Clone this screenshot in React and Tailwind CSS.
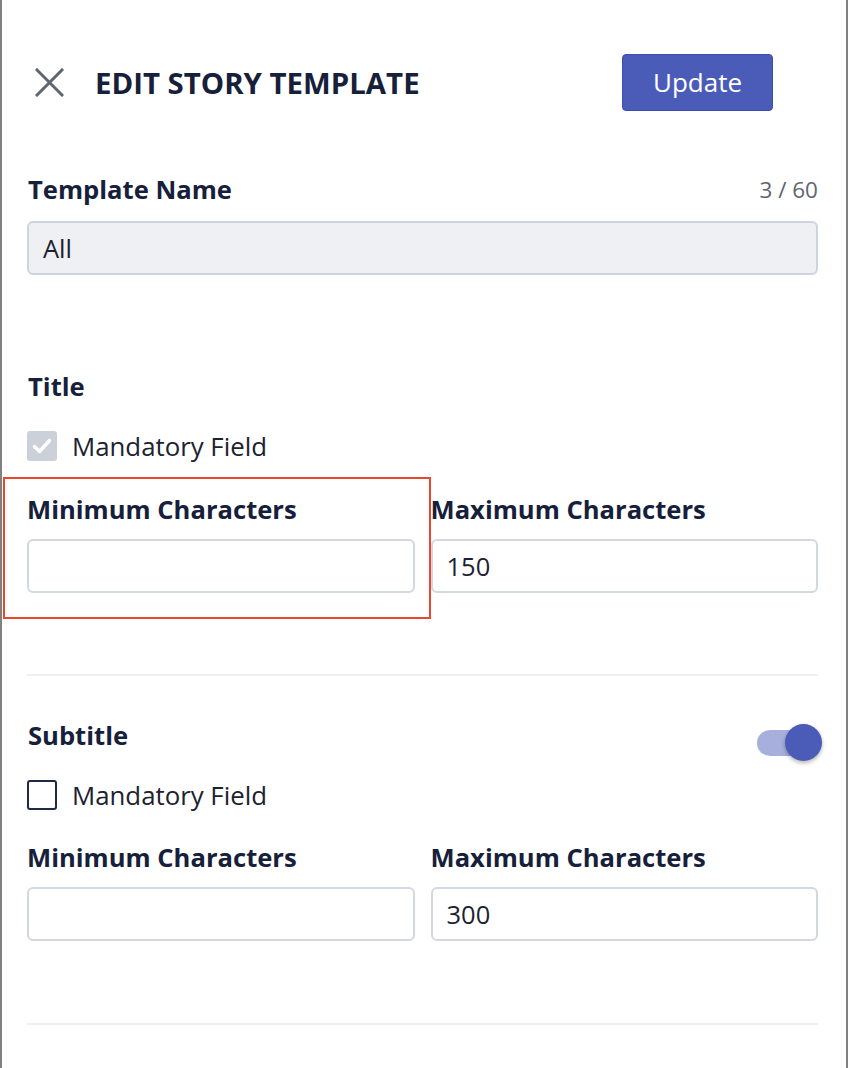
import React from "react";

const font = { fontFamily: '"Open Sans", "Noto Sans", sans-serif' };

function Input({ value, disabled }) {
  return (
    <div
      className={`h-[54px] w-full rounded-[6px] border-2 ${disabled ? "bg-[#eff0f4] border-[#cfd3dc]" : "bg-white border-[#d3d7df]"} flex items-center px-[14px] text-[25.5px] text-[#1c2230]`}
    >
      {value}
    </div>
  );
}

function Field({ label, value }) {
  return (
    <div className="flex-1 flex flex-col">
      <div className="text-[25.6px] font-bold text-[#17203a] leading-[32px] h-[32px]">{label}</div>
      <div className="mt-[13px]">
        <Input value={value} />
      </div>
    </div>
  );
}

export default function App() {
  return (
    <div style={font} className="w-[848px] h-[1068px] bg-white border-x-2 border-[#808080] overflow-hidden relative">
      <div className="pl-[25px] pr-[28px]">
        {/* Header */}
        <div className="flex items-center mt-[54px] h-[57px]">
          <div className="w-[68px] flex items-center pl-[8px]">
            <svg width="29" height="29" viewBox="0 0 29 29" fill="none" stroke="#5f6670" strokeWidth="3" strokeLinecap="square">
              <path d="M2 2 L27 27 M27 2 L2 27" />
            </svg>
          </div>
          <div className="text-[29.4px] font-bold text-[#17203a] flex-1 pt-[2px]">EDIT STORY TEMPLATE</div>
          <button className="w-[151px] h-[57px] rounded-[4px] bg-[#4b5cb8] border border-[#3c4db0] text-white text-[26px] mr-[45px]">
            Update
          </button>
        </div>

        {/* Template Name */}
        <div className="flex items-center justify-between mt-[63px] h-[32px] pl-[1px]">
          <div className="text-[25.6px] font-bold text-[#17203a]">Template Name</div>
          <div className="text-[22.5px] text-[#5f6670]">3 / 60</div>
        </div>
        <div className="mt-[15px]">
          <Input value="All" disabled />
        </div>

        {/* Title section */}
        <div className="mt-[96px] pl-[1px] text-[25.6px] font-bold text-[#17203a] leading-[32px]">Title</div>
        <div className="flex items-center mt-[28px] h-[30px]">
          <div className="w-[30px] h-[30px] rounded-[3px] bg-[#cbd0d9] flex items-center justify-center">
            <svg width="30" height="30" viewBox="0 0 30 30" fill="none" stroke="white" strokeWidth="3.5" strokeLinecap="round" strokeLinejoin="round">
              <path d="M7.5 15.5 L12.5 20.5 L22.5 9.5" />
            </svg>
          </div>
          <div className="ml-[15px] text-[25.8px] text-[#1c2230]">Mandatory Field</div>
        </div>
        <div className="flex gap-[16px] mt-[33px] relative">
          <div className="absolute left-[-24px] top-[-17px] w-[428px] h-[142px] border-2 border-[#e8492e] pointer-events-none" />
          <Field label="Minimum Characters" value="" />
          <Field label="Maximum Characters" value="150" />
        </div>

        <div className="h-[2px] bg-[#eef0f4] mt-[81px]" />

        {/* Subtitle section */}
        <div className="flex items-center justify-between mt-[44px] h-[32px] pl-[1px]">
          <div className="text-[25.6px] font-bold text-[#17203a]">Subtitle</div>
          <div className="relative top-[6px] w-[65px] h-[37px] mr-[-4px]">
            <div className="absolute left-0 top-[6px] w-[53px] h-[26px] rounded-full bg-[#a7afdc]" />
            <div className="absolute right-0 top-0 w-[37px] h-[37px] rounded-full bg-[#4b5cb8] shadow-[0_2px_4px_rgba(0,0,0,0.3)]" />
          </div>
        </div>
        <div className="flex items-center mt-[28px] h-[30px]">
          <div className="w-[30px] h-[30px] rounded-[3px] border-2 border-[#1f2a44] bg-white" />
          <div className="ml-[15px] text-[25.8px] text-[#1c2230]">Mandatory Field</div>
        </div>
        <div className="flex gap-[16px] mt-[32px]">
          <Field label="Minimum Characters" value="" />
          <Field label="Maximum Characters" value="300" />
        </div>

        <div className="h-[2px] bg-[#eef0f4] mt-[82px]" />
      </div>
    </div>
  );
}
